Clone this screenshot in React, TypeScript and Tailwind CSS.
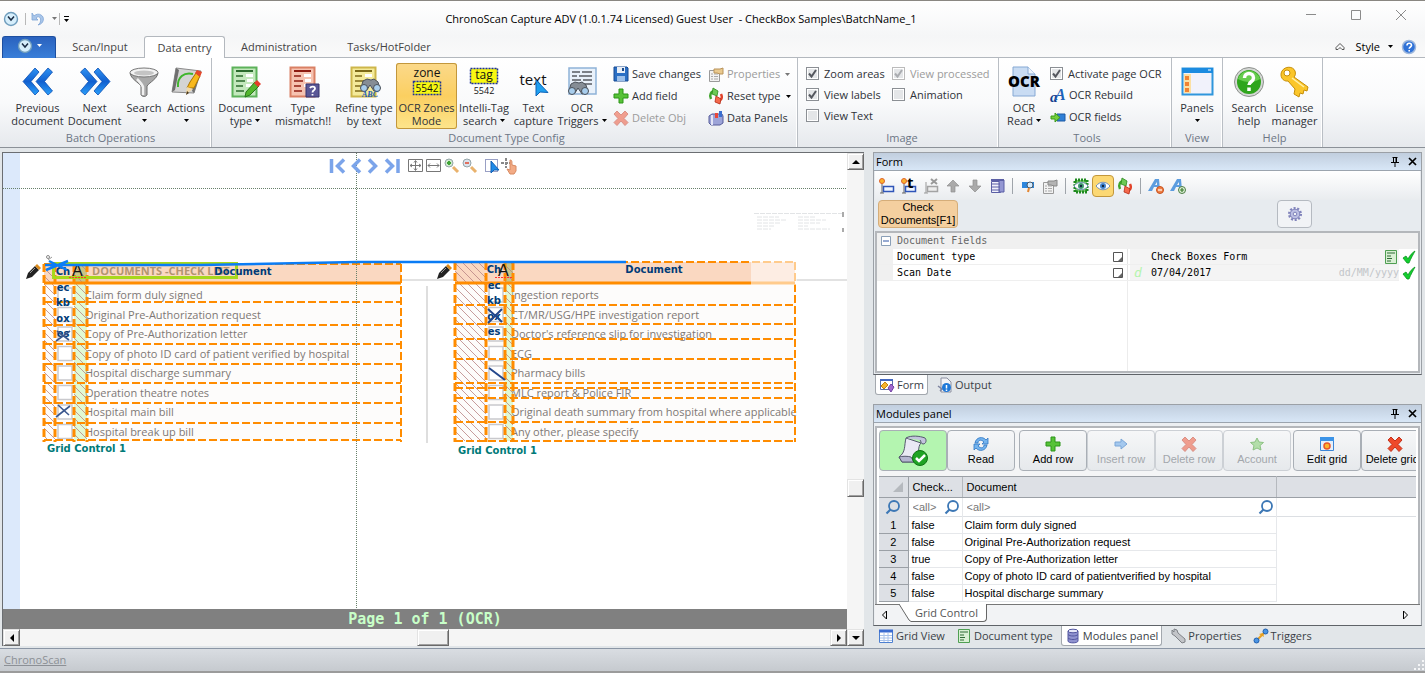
import type { ReactNode } from "react";
import clsx from "clsx";

function Caret({ className = "text-black" }: { className?: string }) {
  return (
    <svg viewBox="0 0 5 3" className={clsx("inline-block w-[5px] h-[3px] shrink-0", className)}>
      <path d="M0 0h5L2.5 3z" fill="currentColor" />
    </svg>
  );
}

function Svg({ size = 16, children }: { size?: number; children: ReactNode }) {
  return (
    <svg
      width={size}
      height={size}
      viewBox={`0 0 ${size} ${size}`}
      fill="none"
      className="block shrink-0 overflow-visible"
      aria-hidden="true"
    >
      {children}
    </svg>
  );
}

function ClockIcon() {
  return (
    <Svg>
      <circle cx="8" cy="8" r="6.5" fill="#d6eefb" stroke="#6f9dbd" strokeWidth="1.4" />
      <path d="M5 5.5 8 9l3-3.5" stroke="#1a2c44" strokeWidth="1.5" />
    </Svg>
  );
}

function DoubleChevron({ flip = false }: { flip?: boolean }) {
  return (
    <Svg size={32}>
      <defs>
        <linearGradient id="chevron" x1="0" y1="0" x2="0" y2="1">
          <stop offset="0" stopColor="#2f93f3" />
          <stop offset=".5" stopColor="#1160d0" />
          <stop offset="1" stopColor="#2aa0fa" />
        </linearGradient>
      </defs>
      <g
        transform={flip ? "translate(32 0) scale(-1 1)" : undefined}
        fill="url(#chevron)"
        stroke="#0b4fb4"
        strokeWidth=".8"
      >
        <path d="M13 2 1 15.500 13 29l4-4-8-9.500L17 6z" />
        <path d="M26 2 14 15.500 26 29l4.500-4-8-9.500 8-9.500z" />
      </g>
    </Svg>
  );
}

function FunnelIcon() {
  return (
    <Svg size={32}>
      <path d="M2 7c1 6 8 9 11 13v9c2 2 4 2 6 0v-9c3-4 10-7 11-13z" fill="#a9a9a9" stroke="#6d6d6d" />
      <path d="M9 13c4 4 5 5 6 8v8" stroke="#f0f0f0" strokeWidth="2.500" />
      <ellipse cx="16" cy="6.500" rx="14" ry="4.500" fill="#f3f3f3" stroke="#777" />
      <ellipse cx="16" cy="7" rx="10" ry="2.500" fill="#c4c4c4" />
    </Svg>
  );
}

function ActionsIcon() {
  return (
    <Svg size={32}>
      <path d="M6 2 31 5 24 27 2 26z" fill="#d4d4d4" stroke="#8a8a8a" />
      <path d="M6 2 9 4 5 24l-3 2zM31 5l-5 2-4 18 2 2z" fill="#6f6f6f" />
      <path d="M8 21C7 11 14 6 23 8" stroke="#3fb52c" strokeWidth="2" />
      <path d="m17 22 3-6 6-9 4 3-6 12z" fill="#f8b81c" stroke="#a97400" />
      <path d="m25 7 2-3 5 2-2 5z" fill="#e5482c" />
      <path d="m16 28 1-7 6 2z" fill="#f2d9a6" />
      <path d="m16 29 1-4 2 2z" fill="#493515" />
    </Svg>
  );
}

function SheetLines({ fill, stroke, bar }: { fill: string; stroke: string; bar: string }) {
  return (
    <>
      <path d="M3.500 1.500h24v29h-24z" fill={fill} stroke={stroke} strokeWidth="2" />
      <path d="M7 5h17" stroke={bar} strokeWidth="2" />
      <path d="M7 10h7M7 15h9M7 20h7M7 25h8" stroke={bar} strokeWidth="1.500" />
      <path d="M17 9.500h7M18 14.500h6M17 19.500h7" stroke="#fff" strokeWidth="3" />
    </>
  );
}

function DocTypeIcon() {
  return (
    <Svg size={32}>
      <SheetLines fill="#c4e8bd" stroke="#5db25a" bar="#2b6b2d" />
      <path d="m17 26 9-10 4 4-9 9-5 2z" fill="#52b62d" stroke="#28771a" />
      <path d="m25 17 3-3 4 4-3 3z" fill="#e43d2b" />
    </Svg>
  );
}

function MismatchIcon() {
  return (
    <Svg size={32}>
      <SheetLines fill="#f6c3b1" stroke="#d98064" bar="#8e1c12" />
      <path d="M19 18h13v13H19z" fill="#5a5796" stroke="#37356d" />
      <path d="M23 22c1-2 5-2 5 .5 0 2-2.500 1.500-2.500 4M25.500 28v1.500" stroke="#fff" strokeWidth="1.800" />
    </Svg>
  );
}

function Binoculars() {
  return (
    <g stroke="#4a5058">
      <path d="m3 3 4-2 4 1 3-1 4 3 2 7-6 2-4-6-3 5-6-2z" fill="#868d95" />
      <circle cx="4" cy="10" r="3.500" fill="#a8cdec" />
      <circle cx="17" cy="10" r="3.500" fill="#a8cdec" />
    </g>
  );
}

function RefineIcon() {
  return (
    <Svg size={32}>
      <SheetLines fill="#f4ea9a" stroke="#cdb64a" bar="#7d6a18" />
      <g transform="translate(12 12)">
        <Binoculars />
      </g>
      <text x="14" y="31" fontSize="8" fontWeight="700" fontStyle="italic" fontFamily="Liberation Serif, serif" fill="#1d5bb5">
        ABC
      </text>
    </Svg>
  );
}

function ZonesIcon() {
  return (
    <Svg size={32}>
      <text x="16" y="11" textAnchor="middle" fontSize="12" fontFamily="Open Sans, sans-serif" fill="#111">
        zone
      </text>
      <path d="M2.500 15.500h27v13h-27z" fill="#f8f812" stroke="#1a2f9c" strokeWidth="1.500" strokeDasharray="2 1" />
      <text x="16" y="26" textAnchor="middle" fontSize="10" fontFamily="Open Sans, sans-serif" fill="#111">
        5542
      </text>
    </Svg>
  );
}

function TagIcon() {
  return (
    <Svg size={32}>
      <path d="M2.500 2.500h27v15h-27z" fill="#f8f812" stroke="#1a2f9c" strokeWidth="1.500" strokeDasharray="2 1" />
      <text x="16" y="13" textAnchor="middle" fontSize="12" fontFamily="Open Sans, sans-serif" fill="#111">
        tag
      </text>
      <text x="16" y="28" textAnchor="middle" fontSize="9" fontFamily="Open Sans, sans-serif" fill="#111">
        5542
      </text>
    </Svg>
  );
}

function TextCaptureIcon() {
  return (
    <Svg size={32}>
      <text x="15" y="19" textAnchor="middle" fontSize="15" fontFamily="Open Sans, sans-serif" fill="#111">
        text
      </text>
      <path d="M18 14v16l4-4 8 .500z" fill="#1fa0f0" stroke="#0c62b8" />
    </Svg>
  );
}

function TriggersOcrIcon() {
  return (
    <Svg size={32}>
      <path d="M3 2h27v26H3z" fill="#e9f1fa" stroke="#8fb2d8" strokeWidth="1.500" />
      <path d="M6 6h8M16 6h10M6 10h5M13 10h13M6 14h9M17 14h9M14 18h12" stroke="#7c8087" strokeWidth="2" />
      <g transform="translate(2 15)">
        <Binoculars />
      </g>
    </Svg>
  );
}

function OcrReadIcon() {
  return (
    <Svg size={32}>
      <path d="M5 1h15l7 7v22H5z" fill="#c9dcf3" stroke="#86a9d4" />
      <path d="M20 1v7h7" fill="#eef5fd" stroke="#86a9d4" />
      <text x="16" y="21" textAnchor="middle" fontSize="15" fontWeight="800" fontFamily="Open Sans, sans-serif" fill="#000">
        OCR
      </text>
    </Svg>
  );
}

function PanelsIcon() {
  return (
    <Svg size={32}>
      <path d="M1.500 2.500h30v26h-30z" fill="#f1f2fb" stroke="#2f96dc" strokeWidth="2" />
      <path d="M1 2h31v5H1z" fill="#1b8be0" />
      <path d="M3 8h7v19H3z" fill="#fbe0a4" />
      <path d="M4 10h4v4H4zM4 16h4v4H4zM4 22h4v4H4z" fill="#f08232" />
      <path d="M27 4h3" stroke="#fff" />
    </Svg>
  );
}

function HelpBigIcon() {
  return (
    <Svg size={32}>
      <circle cx="16" cy="16" r="14.500" fill="#d4d7d4" stroke="#8d918d" />
      <circle cx="16" cy="16" r="12" fill="#2fa51d" />
      <path d="M5 13a11.500 11.500 0 0 1 22 0c-6 4-15 4-22 0z" fill="#66cc4e" />
      <path d="M11.500 12c0-6 9-6 9 0 0 4-4.500 3.500-4.500 7M16 21.500V25" stroke="#fff" strokeWidth="3.500" />
    </Svg>
  );
}

function KeyIcon() {
  return (
    <Svg size={32}>
      <path
        d="M3 5c3-5 11-5 13 0 1 3 0 5-1 6l14 10-1 4-3-1-1 4-3-1-1 4-5-3 1-5-7-8c-5 1-9-5-6-10z"
        fill="#fbc62a"
        stroke="#c68e08"
      />
      <circle cx="8" cy="7" r="3" fill="#fff" stroke="#c68e08" />
      <path d="m13 12 12 9" stroke="#fff0a8" strokeWidth="1.500" />
    </Svg>
  );
}

function FloppyIcon() {
  return (
    <Svg>
      <path d="M1 1h13l1 1v13H1z" fill="#2a6fc4" stroke="#164b92" />
      <path d="M4 1h8v6H4z" fill="#e8eef6" />
      <path d="M4 10h8v5H4z" fill="#9cc0ea" />
      <path d="M9 2h2v3H9z" fill="#1b4a8a" />
    </Svg>
  );
}

function PlusIcon() {
  return (
    <Svg>
      <path d="M6 1h4v5h5v4h-5v5H6v-5H1V6h5z" fill="#57c238" stroke="#2c9518" />
    </Svg>
  );
}

function CrossIcon({ faded = false }: { faded?: boolean }) {
  return (
    <Svg>
      <path
        d="m4 1 4 4 4-4 3 3-4 4.500 4 4-3 3-4-4.500-4 4.500-3-3 4-4L1 4z"
        fill="#ee4a2a"
        stroke="#c4301a"
        opacity={faded ? 0.5 : 1}
      />
    </Svg>
  );
}

function PropsIcon({ gray = false }: { gray?: boolean }) {
  return (
    <Svg>
      <path d="M1.500 4.500h10v11h-10z" fill="#f2f2f2" stroke="#9a9a9a" />
      <path d="M3 8h2M6 8h4M3 10.500h2M6 10.500h4M3 13h2M6 13h4" stroke="#a8a8a8" />
      <path d="M6 3h6l3-1v6h-3l-3-1H6z" fill={gray ? "#b4b4b4" : "#e9c98e"} stroke={gray ? "#888" : "#b9935a"} />
    </Svg>
  );
}

function ResetIcon() {
  return (
    <Svg>
      <path d="M3 11C1 7 3 3 7 3" stroke="#3fa52c" strokeWidth="2.500" />
      <path d="M5 0l5 3-1 5-5-2z" fill="#6cc955" stroke="#2c8a1d" strokeWidth=".8" />
      <path d="M13 6c2 4 0 7-4 7" stroke="#e2432a" strokeWidth="2.500" />
      <path d="M12 16l-5-2 1-6 5 3z" fill="#f4694c" stroke="#b42a14" strokeWidth=".8" />
    </Svg>
  );
}

function DataPanelsIcon() {
  return (
    <Svg>
      <path d="m1 6 3-2h10l1 2v7l-3 2H3l-2-2z" fill="#9da4d8" stroke="#565d9a" />
      <path d="M3 5h2v10H3z" fill="#e3e5f7" />
      <path d="M7 3h3v5H7z" fill="#e8483b" />
      <path d="M11 1h3v6h-3z" fill="#3b6fd0" />
    </Svg>
  );
}

function RebuildIcon() {
  return (
    <Svg>
      <text x="0" y="15" fontSize="15" fontWeight="700" fontStyle="italic" fontFamily="Liberation Serif, serif" fill="#123f8f">
        a
      </text>
      <text x="5" y="13" fontSize="16" fontWeight="700" fontStyle="italic" fontFamily="Liberation Serif, serif" fill="#1d62b8">
        A
      </text>
    </Svg>
  );
}

function FieldsIcon() {
  return (
    <Svg>
      <path d="M7 5h8v7H7z" fill="#2f7fd6" stroke="#1c5aa5" />
      <path d="M1 7h4V4l5 4.500L5 13v-3H1z" fill="#72cf3a" stroke="#3d9a1a" />
    </Svg>
  );
}

interface BigButtonProps {
  icon: ReactNode;
  lines: [string, string];
  width: string;
  menu?: boolean;
  active?: boolean;
}

function BigButton({ icon, lines, width, menu, active }: BigButtonProps) {
  return (
    <button
      className={clsx(
        "h-[66px] pt-[3px] flex flex-col items-center shrink-0 whitespace-nowrap leading-[13px]",
        width,
        active && "rounded-[3px] bg-gradient-to-b from-[#fbd98a] via-[#fbcf60] to-[#fde58c] shadow-[inset_0_0_0_1px_#c2973c]"
      )}
    >
      {icon}
      <span className="mt-[3px]">{lines[0]}</span>
      <span className="flex items-center gap-[3px] h-[13px]">
        {lines[1]}
        {menu && <Caret />}
      </span>
    </button>
  );
}

function Group({ title, width, children }: { title: string; width: string; children: ReactNode }) {
  return (
    <section
      className={clsx(
        "shrink-0 flex flex-col justify-between pt-[5px] pb-px border-r border-[#b9bec4] shadow-[inset_-1px_0_0_#fff]",
        width
      )}
    >
      <div className="flex">{children}</div>
      <h2 className="text-center leading-4 text-[#6d7685]">{title}</h2>
    </section>
  );
}

function SmallButton({ icon, label, menu, disabled }: { icon: ReactNode; label: string; menu?: boolean; disabled?: boolean }) {
  return (
    <button
      disabled={disabled}
      className={clsx("flex items-center gap-[3px] h-[22px] whitespace-nowrap", disabled && "text-[#9b9b9b]")}
    >
      {icon}
      {label}
      {menu && <Caret className={clsx("ml-0.5", disabled ? "text-[#777]" : "text-black")} />}
    </button>
  );
}

function Check({ label, checked, disabled }: { label: string; checked?: boolean; disabled?: boolean }) {
  return (
    <label className={clsx("flex items-center gap-[5px] h-[21px] whitespace-nowrap", disabled && "text-[#9b9b9b]")}>
      <span className="relative block w-[13px] h-[13px] shrink-0">
        <input
          type="checkbox"
          defaultChecked={checked}
          disabled={disabled}
          className="peer block appearance-none w-[13px] h-[13px] border border-[#8b8f94] bg-[#e4e6e8] shadow-[inset_0_0_0_1px_#fff] disabled:border-[#bbb]"
        />
        <svg
          viewBox="0 0 13 13"
          className="absolute inset-0 w-[13px] h-[13px] hidden peer-checked:block peer-disabled:opacity-40 pointer-events-none"
        >
          <path d="M3 6.500 5.500 9.500 10 3" fill="none" stroke="#55585f" strokeWidth="2" />
        </svg>
      </span>
      {label}
    </label>
  );
}

function TitleBar() {
  return (
    <header className="h-9 flex items-center bg-gradient-to-b from-white to-[#f5f6f7] border-t border-[#8a8782]">
      <div className="w-[74px] shrink-0 flex items-center pl-[3px]">
        <ClockIcon />
        <span className="ml-1.5 w-px h-3 bg-[#b8b8b8]" />
        <button aria-label="Undo" className="ml-1">
          <Svg>
            <path d="M2 2v7h6L6 7c3-3 6 0 4 5l-2 2c6-1 7-8 3-10-2-1.500-5-1-7 1z" fill="#a9c6ea" stroke="#7fa5d6" strokeWidth=".8" />
          </Svg>
        </button>
        <Caret className="ml-1.5 text-[#777]" />
        <span className="ml-0.5 w-px h-3 bg-[#b8b8b8]" />
        <svg viewBox="0 0 5 6" className="ml-1 w-[5px] h-1.5" aria-hidden="true">
          <path d="M0 0h5v1H0zM0 3h5L2.500 6z" />
        </svg>
      </div>
      <h1 className="flex-1 min-w-0 truncate text-center whitespace-pre text-black">
        {"ChronoScan Capture ADV (1.0.1.74 Licensed) Guest User  - CheckBox Samples\\BatchName_1"}
      </h1>
      <div className="flex self-start shrink-0 pr-0.5 text-[#8b8b8b]">
        <button aria-label="Minimize" className="w-[45px] h-7 flex justify-center items-center">
          <Svg size={12}>
            <path d="M1 5.500h10" stroke="currentColor" />
          </Svg>
        </button>
        <button aria-label="Maximize" className="w-[45px] h-7 flex justify-center items-center">
          <Svg size={12}>
            <path d="M1.500 1.500h9v9h-9z" stroke="currentColor" />
          </Svg>
        </button>
        <button aria-label="Close" className="w-[45px] h-7 flex justify-center items-center">
          <Svg size={12}>
            <path d="m1 1 10 10M11 1 1 11" stroke="currentColor" />
          </Svg>
        </button>
      </div>
    </header>
  );
}

function TabRow() {
  return (
    <nav className="h-[22px] flex items-stretch bg-gradient-to-b from-[#f5f6f7] to-[#fafafa] text-[#444]">
      <button
        aria-label="Application menu"
        className="ml-0.5 w-[54px] flex items-center justify-center gap-1 pb-1 rounded-t-[3px] border border-b-0 border-[#1d4fa0] bg-gradient-to-b from-[#2a62be] to-[#3a7fd9] text-white"
      >
        <ClockIcon />
        <Caret className="text-white" />
      </button>
      <div className="flex flex-1 border-b border-[#b3b8be]">
        <button className="w-[88px]">Scan/Input</button>
        <button className="relative -mb-px w-[81px] rounded-t-[3px] border border-b-0 border-[#b3b8be] bg-white">
          Data entry
        </button>
        <button className="w-[108px]">Administration</button>
        <button className="w-28">Tasks/HotFolder</button>
        <div className="flex-1" />
        <button aria-label="Minimize ribbon" className="w-5 flex items-center justify-center">
          <Svg size={10}>
            <path d="M1 5.500 5 1.500l4 4v2H7L5 5.500 3 7.500H1z" stroke="#555" />
          </Svg>
        </button>
        <button className="flex items-center gap-2 pl-1.5 pr-1 text-black">
          Style
          <Caret />
        </button>
        <button aria-label="Help" className="pl-1 pr-2">
          <Svg>
            <circle cx="8" cy="8" r="6.500" fill="#2f72d8" stroke="#9fb8dc" strokeWidth="1.500" />
            <path d="M6 6.500c0-3 4.500-3 4.500 0C10.500 8 8.200 8 8.200 9.700M8.200 11v1.500" stroke="#fff" strokeWidth="1.600" />
          </Svg>
        </button>
      </div>
    </nav>
  );
}

function Ribbon() {
  return (
    <div className="h-[90px] shrink-0 flex bg-gradient-to-b from-white via-[#f9fafb] to-[#e6e9ed] border-b border-[#8b9198] overflow-hidden text-[#2f3238]">
      <Group title="Batch Operations" width="w-[212px] pl-2.5">
        <BigButton icon={<DoubleChevron />} lines={["Previous", "document"]} width="w-[55px]" />
        <BigButton icon={<DoubleChevron flip />} lines={["Next", "Document"]} width="w-[59px]" />
        <BigButton icon={<FunnelIcon />} lines={["Search", ""]} width="w-10" menu />
        <BigButton icon={<ActionsIcon />} lines={["Actions", ""]} width="w-11" menu />
      </Group>
      <Group title="Document Type Config" width="w-[586px] pl-1">
        <BigButton icon={<DocTypeIcon />} lines={["Document", "type"]} width="w-[58px]" menu />
        <BigButton icon={<MismatchIcon />} lines={["Type", "mismatch!!"]} width="w-[58px]" />
        <BigButton icon={<RefineIcon />} lines={["Refine type", "by text"]} width="w-16" />
        <BigButton icon={<ZonesIcon />} lines={["OCR Zones", "Mode"]} width="w-[61px]" active />
        <BigButton icon={<TagIcon />} lines={["Intelli-Tag", "search"]} width="w-[54px]" menu />
        <BigButton icon={<TextCaptureIcon />} lines={["Text", "capture"]} width="w-[45px]" />
        <BigButton icon={<TriggersOcrIcon />} lines={["OCR", "Triggers"]} width="w-[52px]" menu />
        <div className="ml-[5px] w-[95px] flex flex-col">
          <SmallButton icon={<FloppyIcon />} label="Save changes" />
          <SmallButton icon={<PlusIcon />} label="Add field" />
          <SmallButton icon={<CrossIcon faded />} label="Delete Obj" disabled />
        </div>
        <div className="flex flex-col">
          <SmallButton icon={<PropsIcon />} label="Properties" menu disabled />
          <SmallButton icon={<ResetIcon />} label="Reset type" menu />
          <SmallButton icon={<DataPanelsIcon />} label="Data Panels" />
        </div>
      </Group>
      <Group title="Image" width="w-[201px] pl-2">
        <div className="w-[86px] flex flex-col">
          <Check label="Zoom areas" checked />
          <Check label="View labels" checked />
          <Check label="View Text" />
        </div>
        <div className="flex flex-col">
          <Check label="View processed" checked disabled />
          <Check label="Animation" />
        </div>
      </Group>
      <Group title="Tools" width="w-[173px] pl-1">
        <BigButton icon={<OcrReadIcon />} lines={["OCR", "Read"]} width="w-[42px]" menu />
        <div className="ml-[5px] flex flex-col">
          <Check label="Activate page OCR" checked />
          <SmallButton icon={<RebuildIcon />} label="OCR Rebuild" />
          <SmallButton icon={<FieldsIcon />} label="OCR fields" />
        </div>
      </Group>
      <Group title="View" width="w-[51px]">
        <BigButton icon={<PanelsIcon />} lines={["Panels", ""]} width="w-[50px]" menu />
      </Group>
      <Group title="Help" width="w-[100px] pl-1">
        <BigButton icon={<HelpBigIcon />} lines={["Search", "help"]} width="w-11" />
        <BigButton icon={<KeyIcon />} lines={["License", "manager"]} width="w-[47px]" />
      </Group>
    </div>
  );
}

const leftRows = [
  "Claim form duly signed",
  "Original Pre-Authorization request",
  "Copy of Pre-Authorization letter",
  "Copy of photo ID card of patient verified by hospital",
  "Hospital discharge summary",
  "Operation theatre notes",
  "Hospital main bill",
  "Hospital break up bill",
];

const rightRows = [
  "Ingestion reports",
  "CT/MR/USG/HPE investigation report",
  "Doctor's reference slip for investigation",
  "ECG",
  "Pharmacy bills",
  "MLC report & Police FIR",
  "Original death summary from hospital where applicable",
  "Any other, please specify",
];

interface ZoneGridProps {
  x: number;
  top: number;
  right: number;
  cols: [number, number, number];
  lines: number[];
  rows: string[];
  labelX: number;
  heading?: string;
}

// zone overlay in page coordinates: x is the outer left edge, cols the inner dividers
function ZoneGrid({ x, top, right, cols, lines, rows, labelX, heading }: ZoneGridProps) {
  const [c1, c2, c3] = cols;
  const w = right - x;
  return (
    <g>
      <rect x={x} y={283} width={w} height={158} fill="#fdfcfb" />
      {rows.map((row, i) => (
        <g key={row}>
          <rect x={c1 + 3} y={288 + i * 19.5} width={14} height={14} fill="#fff" stroke="#c9c9cd" strokeWidth="1.5" />
          <text
            x={c3 - 2}
            y={299 + i * 19.5}
            fontSize="11"
            fontFamily="Open Sans, sans-serif"
            fill="#7d7875"
          >
            {row}
          </text>
        </g>
      ))}
      <rect x={x} y={top} width={w} height={283 - top} fill="#fad8c1" />
      <rect x={c2} y={283} width={c3 - c2} height={158} fill="#b6f59c" fillOpacity=".4" />
      <rect x={c2} y={top} width={c3 - c2} height={283 - top} fill="#a8b860" fillOpacity=".6" />
      <rect x={x} y={top} width={c1 - x} height={441 - top} fill="url(#hatch)" />
      <rect x={c2} y={top} width={c3 - c2} height={441 - top} fill="url(#hatch)" />
      <g stroke="#ff8c00" strokeWidth="2" strokeDasharray="8 3" fill="none">
        {lines.map((y) => (
          <path key={y} d={`M${x} ${y}H${right}`} />
        ))}
        <path d={`M${x} ${top}H${right}`} />
        <path strokeWidth="3" d={`M${x} ${top}V442M${c1} ${top}V442M${c2} ${top}V442M${c3} ${top}V442`} />
        <path d={`M${right} ${top}V442`} />
      </g>
      <path d={`M${x} 283H${right}`} stroke="#ff8c00" strokeWidth="3" />
      {heading && (
        <g>
          <text x={c3 + 5} y="275" fontSize="11" fontWeight="700" fontFamily="Open Sans, sans-serif" fill="#b39470">
            {heading}
          </text>
          <path d="M53.500 263.500h183v14h-183z" stroke="#a8d81c" strokeWidth="3" />
        </g>
      )}
      <g fontSize="10" fontWeight="700" fontFamily="DejaVu Sans, sans-serif" fill="#003c78" textAnchor="middle">
        {["Ch", "ec", "kb", "ox", "es"].map((part, i) => (
          <text key={part} x={c1 + 8} y={top + 11 + i * 15.500}>
            {part}
          </text>
        ))}
        <text x={labelX} y={top + 11}>
          Document
        </text>
      </g>
      <text x={c3 - 15} y={276} fontSize="16" fontFamily="Liberation Sans, sans-serif" fill="#111">
        A
      </text>
      <path d={`M${c3 - 18} 277.500h18`} stroke="#f33" strokeDasharray="2 1" />
      <text x={x + 3} y={x < 100 ? 452 : 454} fontSize="10" fontWeight="700" fontFamily="DejaVu Sans, sans-serif" fill="#007a78">
        Grid Control 1
      </text>
      <g transform={`translate(${x - 18} 265)`}>
        <path d="m0 14 2-6 7-7 4 4-7 7z" fill="#222" />
        <path d="m9 1 2-2 4 4-2 2z" fill="#d98a1c" />
        <path d="m4 8 5-5" stroke="#999" />
      </g>
    </g>
  );
}

function ScanPage() {
  return (
    <svg viewBox="3 153 844 476" width="844" height="476" className="absolute top-0 left-0" fill="none">
      <defs>
        <pattern id="hatch" width="8" height="8" patternUnits="userSpaceOnUse">
          <path d="M-1-1l10 10M7-1l2 2M-1 7l2 2" stroke="#b98484" strokeWidth=".8" />
        </pattern>
      </defs>
      <path d="M3 153h17v476H3z" fill="#dce9fb" />
      <path d="M401 280h446" stroke="#d9d9d9" strokeWidth="1.500" />
      <path d="M427 286v157" stroke="#dedede" strokeWidth="2" />
      <ZoneGrid
        x={44}
        top={264}
        right={401}
        cols={[55, 74, 87]}
        lines={[302, 325, 344, 364, 383, 403, 423, 440]}
        rows={leftRows}
        labelX={243}
        heading="DOCUMENTS -CHECK LIST"
      />
      <path d="m56 341 14-10M57 331l12 9M56 417l14-11M58 405l11 10" stroke="#3c588f" strokeWidth="1.600" />
      <ZoneGrid
        x={455}
        top={262}
        right={795}
        cols={[486, 505, 513]}
        lines={[305, 324, 339, 359, 383, 388, 398, 422, 441]}
        rows={rightRows}
        labelX={654}
      />
      <path d="m488 323 14-14M488 309l14 13M489 368l16 12" stroke="#24478c" strokeWidth="2" />
      <path d="M751 260h46v25h-46z" fill="#fff" fillOpacity=".55" />
      <path d="M45 265h155l157-3h269M46 270l22-9M49 261l18 9" stroke="#0a7cf5" strokeWidth="2.500" />
      <path d="m48 260 4-3" stroke="#999" />
      <circle cx="48" cy="257" r="1.500" stroke="#888" />
      <path d="M356.500 153v476M3 188.500h844" stroke="#67806a" strokeDasharray="1 1" />
      <g stroke="#e2e4e6">
        <path d="M754 213.500h90M757 217h22M757 220h30M757 223h24M757 226h18M757 229h14M798 217h18M798 220h28M798 223h22M798 226h10M798 229h32" strokeDasharray="5 1" />
        <path d="M843 212v5M843 228v4" stroke="#aaa" strokeWidth="2" />
      </g>
    </svg>
  );
}

function CanvasTools() {
  return (
    <div className="absolute top-1 left-[326px] flex items-center">
      <button aria-label="First page">
        <Svg size={18}>
          <path d="M2.500 2v14M15 2.500 8.500 9l6.500 6.500" stroke="#7ba4ea" strokeWidth="3.500" />
        </Svg>
      </button>
      <button aria-label="Previous page">
        <Svg size={18}>
          <path d="M13 2.500 6.500 9l6.500 6.500" stroke="#7ba4ea" strokeWidth="3.500" />
        </Svg>
      </button>
      <button aria-label="Next page">
        <Svg size={18}>
          <path d="M4 2.500 10.500 9 4 15.500" stroke="#7ba4ea" strokeWidth="3.500" />
        </Svg>
      </button>
      <button aria-label="Last page">
        <Svg size={18}>
          <path d="M3 2.500 9.500 9 3 15.500M15 2v14" stroke="#7ba4ea" strokeWidth="3.500" />
        </Svg>
      </button>
      <button aria-label="Fit page" className="ml-1.5">
        <Svg size={18}>
          <path d="M1.500 2.500h14v12h-14zM8.500 4v9M3 8.500h11M7 5.500l1.500-2 1.500 2M7 11.500l1.500 2 1.500-2M5 7 3 8.500 5 10M12 7l2 1.500-2 1.500" stroke="#777" />
        </Svg>
      </button>
      <button aria-label="Fit width">
        <Svg size={18}>
          <path d="M1.500 2.500h14v12h-14zM3 8.500h11M5 6.500l-2 2 2 2M12 6.500l2 2-2 2" stroke="#777" />
        </Svg>
      </button>
      <button aria-label="Zoom in">
        <Svg size={18}>
          <path d="m10 10 5 5" stroke="#e9b26c" strokeWidth="3" />
          <circle cx="6" cy="6" r="4" fill="#cfe9cd" stroke="#95a5a9" />
          <path d="M4 6h4M6 4v4" stroke="#3fa535" strokeWidth="2" />
        </Svg>
      </button>
      <button aria-label="Zoom out">
        <Svg size={18}>
          <path d="m10 10 5 5" stroke="#e9b26c" strokeWidth="3" />
          <circle cx="6" cy="6" r="4" fill="#dbe3ee" stroke="#95a5a9" />
          <path d="M4 6h4" stroke="#e0705f" strokeWidth="2" />
        </Svg>
      </button>
      <button aria-label="Select" className="ml-1">
        <Svg size={18}>
          <path d="M2.500 2.500h12v12h-12z" stroke="#32408a" strokeDasharray="1 1" />
          <path d="M8 4v12l3-3h5z" fill="#1f8be8" stroke="#1260b4" />
        </Svg>
      </button>
      <button aria-label="Pan">
        <Svg size={18}>
          <path d="M5 1v10M0 6h10" stroke="#888" strokeWidth="2" strokeDasharray="3 1" />
          <path d="M9 3c2 0 2 1 2 5l4 1v5l-2 3H9l-3-5 3 1z" fill="#f3ab85" stroke="#d88a62" />
        </Svg>
      </button>
    </div>
  );
}

const bevel =
  "bg-[#f0f0f0] border border-t-[#e3e3e3] border-l-[#e3e3e3] border-r-[#696969] border-b-[#696969] shadow-[inset_1px_1px_0_#fff,inset_-1px_-1px_0_#a0a0a0]";

function ScrollButton({ label, d }: { label: string; d: string }) {
  return (
    <button aria-label={label} className={clsx("w-[17px] h-[17px] shrink-0 flex items-center justify-center", bevel)}>
      <Svg size={8}>
        <path d={d} fill="#000" />
      </Svg>
    </button>
  );
}

function Viewer() {
  return (
    <main className="flex-1 min-w-0 flex flex-col mt-1 mb-0.5 ml-0.5 border-t border-l border-[#6b6e72] bg-white">
      <div className="flex-1 min-h-0 flex">
        <div className="relative flex-1 min-w-0 overflow-hidden bg-white">
          <ScanPage />
          <CanvasTools />
          <p className="absolute inset-x-0 bottom-0 h-5 leading-5 bg-[#808080] text-center text-[#c8ffc8] text-[15px] font-bold font-['DejaVu_Sans_Mono',monospace]">
            Page 1 of 1 (OCR)
          </p>
        </div>
        <div className="w-[17px] shrink-0 flex flex-col justify-between bg-[#f5f5f5]">
          <ScrollButton label="Scroll up" d="M0 6 4 2l4 4z" />
          <div className={clsx("h-[18px] mt-[176px]", bevel)} />
          <span />
        </div>
      </div>
      <div className="h-[17px] shrink-0 flex bg-[#f5f5f5]">
        <ScrollButton label="Scroll left" d="M6 0v8L2 4z" />
        <div className="flex-1 flex justify-center pl-4">
          <div className={clsx("w-8", bevel)} />
        </div>
        <ScrollButton label="Scroll right" d="M2 0v8l4-4z" />
        <ScrollButton label="Scroll down" d="M0 2h8L4 6z" />
      </div>
    </main>
  );
}

function PanelTitle({ title }: { title: string }) {
  return (
    <div className="h-[18px] shrink-0 flex items-center pl-0.5 pr-0.5 bg-gradient-to-b from-[#c1cede] to-[#d8e7f7] border-b border-[#9ba4ae] text-black">
      <h2 className="flex-1">{title}</h2>
      <button aria-label={`Pin ${title}`} className="mr-1.5">
        <Svg size={12}>
          <path d="M3.500 1.500h5M4.500 1.500v5M7.500 1.500v5M2 6.500h8M6 7v4" stroke="#000" />
          <path d="M7 1v6" stroke="#000" />
        </Svg>
      </button>
      <button aria-label={`Close ${title}`}>
        <Svg size={12}>
          <path d="m2 2 7 7M9 2 2 9" stroke="#000" strokeWidth="1.700" />
        </Svg>
      </button>
    </div>
  );
}

function GridFieldIcon({ gray = false }: { gray?: boolean }) {
  return (
    <Svg>
      <path d="M3 4v11M1 15h4" stroke={gray ? "#999" : "#666"} />
      <path d="M4.500 8.500h10v5h-10z" fill={gray ? "#ececec" : "#f0f6ff"} stroke={gray ? "#a3a3a3" : "#2f55b8"} strokeWidth="1.500" />
      {gray ? (
        <path d="m8 1 6 5M14 1 8 6" stroke="#999" strokeWidth="2" />
      ) : (
        <circle cx="3" cy="3" r="2.500" fill="#fbb42c" stroke="#e0622a" />
      )}
    </Svg>
  );
}

function Arrow({ down = false }: { down?: boolean }) {
  return (
    <Svg>
      <path
        transform={down ? "rotate(180 8 8)" : undefined}
        d="m8 2 6 6h-4v6H6V8H2z"
        fill="#aaa"
        stroke="#8f8f8f"
        strokeWidth=".7"
      />
    </Svg>
  );
}

function Eye({ bg }: { bg?: boolean }) {
  return (
    <Svg>
      {bg && <path d="M2 2h12v12H2z" fill="#7ccf6c" stroke="#1f8a1f" strokeWidth="3" strokeDasharray="2 1" />}
      <path d="M1 8c4-5 10-5 14 0-4 5-10 5-14 0z" fill="#fff" stroke="#6f8fb8" />
      <circle cx="8" cy="8" r="3" fill={bg ? "#3f9a72" : "#3f83cf"} />
      <circle cx="8" cy="8" r="1.200" fill="#13253d" />
    </Svg>
  );
}

function FontIcon({ plus = false }: { plus?: boolean }) {
  return (
    <Svg>
      <path d="M0 13 7 1h4l1 11H9V9H6l-2 4zM7 7h2V4z" fill="#5c9ddf" />
      <circle cx="12" cy="12" r="3.500" fill={plus ? "#dff0d8" : "#f08045"} stroke={plus ? "#4b7c41" : "#c7501c"} />
      <path d={plus ? "M10 12h4M12 10v4" : "M10 12h4"} stroke={plus ? "#3a7a2c" : "#fff"} strokeWidth="1.200" />
    </Svg>
  );
}

function DatabaseIcon() {
  return (
    <Svg>
      <path d="M3 3v10c0 2.500 10 2.500 10 0V3z" fill="#8f92cf" stroke="#5356a0" />
      <path d="M3 6.500c2 2 8 2 10 0M3 10c2 2 8 2 10 0" stroke="#5356a0" />
      <ellipse cx="8" cy="3" rx="5" ry="1.800" fill="#e6e7f8" stroke="#5356a0" />
    </Svg>
  );
}

function SheetIcon() {
  return (
    <Svg>
      <path d="M2.500 1.500h11v13h-11z" fill="#d9f0d4" stroke="#4f9f52" />
      <path d="M4 4h8M4 7h4M4 9.500h5M4 12h4" stroke="#2f6b35" strokeWidth="1.200" />
    </Svg>
  );
}

function TickIcon() {
  return (
    <Svg>
      <path d="m2 9 3-2 2 3c2-4 4-6 7-8-2 4-4 7-6 12H6z" fill="#12cf2e" stroke="#0b961f" strokeWidth=".8" />
    </Svg>
  );
}

function ToolSep() {
  return <span className="w-px h-4 mx-px bg-[#9fa4aa]" />;
}

function FieldRow({ label, value, hint }: { label: string; value: string; hint?: string }) {
  const id = label.toLowerCase().replace(" ", "-");
  return (
    <div className="flex h-4 border-b border-[#efefef]">
      <div className="w-4 shrink-0 bg-[#f0f0f0]" />
      <label htmlFor={id} className="w-[234px] shrink-0 flex items-center justify-between pl-1 pr-1 text-black">
        {label}
        <Svg size={10}>
          <path d="M.500 .500h9v9h-9z" fill="#fff" stroke="#555" />
          <path d="M9 5v4H5z" fill="#666" />
        </Svg>
      </label>
      <div className="w-[3px] shrink-0 border-l border-[#e4e4e4]" />
      <div className="flex-1 min-w-0 flex items-center bg-[#f4f4f4]">
        <span className="w-[21px] shrink-0 pl-1 italic text-[13px] text-[#b4f5ae]">{hint && "d"}</span>
        <input id={id} defaultValue={value} className="flex-1 min-w-0 bg-transparent text-black outline-none" />
        {hint ? <span className="text-[#c3c6ca]">{hint}</span> : <SheetIcon />}
        <span className="w-[19px] h-4 flex justify-center bg-white">
          <TickIcon />
        </span>
      </div>
    </div>
  );
}

function PanelTab({ icon, label, active }: { icon: ReactNode; label: string; active?: boolean }) {
  return (
    <button
      className={clsx(
        "h-5 flex items-center gap-0.5 px-[3px] whitespace-nowrap text-[#3a3f47]",
        active && "bg-white rounded-b-[3px] border border-t-0 border-[#a3a8ae]"
      )}
    >
      {icon}
      {label}
    </button>
  );
}

function FormPanel() {
  return (
    <section className="flex-1 min-h-0 flex flex-col">
      <div className="flex-1 min-h-0 flex flex-col border border-[#9ba0a6] border-b-[#5f6368]">
        <PanelTitle title="Form" />
        <div className="flex-1 min-h-0 flex flex-col px-px pb-px bg-[#e7ebef]">
          <div className="h-[29px] shrink-0 flex items-center gap-1.5 px-1 bg-gradient-to-b from-white to-[#e9ecef]">
            <button aria-label="Add field">
              <GridFieldIcon />
            </button>
            <button aria-label="Add text field" className="relative">
              <GridFieldIcon />
              <span className="absolute left-1.5 -top-1 text-[15px] leading-4 font-bold text-black">t</span>
            </button>
            <button aria-label="Remove field">
              <GridFieldIcon gray />
            </button>
            <button aria-label="Move up">
              <Arrow />
            </button>
            <button aria-label="Move down">
              <Arrow down />
            </button>
            <button aria-label="Table">
              <Svg>
                <path d="M2.500 3.500h9v11h-9z" fill="#f1f1fb" stroke="#5b5fa5" />
                <path d="M10 2h5v12h-5zM3 6h8M3 9h8M3 12h8" fill="#9497d3" stroke="#5b5fa5" />
                <path d="M2 2h13" stroke="#5b5fa5" strokeWidth="2" />
              </Svg>
            </button>
            <ToolSep />
            <button aria-label="Find field">
              <Svg>
                <path d="M2 4h12v6H2z" fill="#2d86dc" />
                <circle cx="10" cy="7" r="3" fill="#d5ecff" stroke="#4b5866" />
                <path d="m9 10-1 4" stroke="#e48732" strokeWidth="2" />
              </Svg>
            </button>
            <button aria-label="Field properties">
              <PropsIcon gray />
            </button>
            <ToolSep />
            <button aria-label="Show zones">
              <Eye bg />
            </button>
            <button
              aria-label="Show fields"
              className="w-[22px] h-[22px] -mx-[3px] flex items-center justify-center rounded-sm border border-[#c2973c] bg-[#fcd873]"
            >
              <Eye />
            </button>
            <button aria-label="Refresh">
              <ResetIcon />
            </button>
            <ToolSep />
            <button aria-label="Smaller font">
              <FontIcon />
            </button>
            <button aria-label="Larger font">
              <FontIcon plus />
            </button>
          </div>
          <div className="h-[31px] shrink-0 flex items-start justify-between pl-[3px] pr-[108px] text-black font-['Liberation_Sans',sans-serif]">
            <button className="w-20 h-7 leading-[13px] border border-[#d5ad79] rounded-sm bg-[#f4cf9f]">
              Check Documents[F1]
            </button>
            <button
              aria-label="Settings"
              className="w-[35px] h-7 flex items-center justify-center border border-[#b5bac1] rounded-sm bg-[#f1f3f6]"
            >
              <Svg>
                <circle cx="8" cy="8" r="5.800" stroke="#8083bb" strokeWidth="2.500" strokeDasharray="2 1.600" />
                <circle cx="8" cy="8" r="4.800" fill="#bcbfe3" stroke="#8083bb" />
                <circle cx="8" cy="8" r="1.800" fill="#f1f3f6" stroke="#8083bb" />
              </Svg>
            </button>
          </div>
          <div className="flex-1 min-h-0 flex flex-col border-2 border-[#b4b7bb] bg-white text-[10px] font-['DejaVu_Sans_Mono',monospace]">
            <div className="h-4 shrink-0 flex items-center gap-1.5 pl-1 bg-[#f0f0f0] text-[#666]">
              <button aria-label="Collapse">
                <Svg size={10}>
                  <path d="M.500 .500h9v9h-9z" fill="#fff" stroke="#8ba0b8" />
                  <path d="M2 5h6" stroke="#2f55a5" />
                </Svg>
              </button>
              Document Fields
            </div>
            <FieldRow label="Document type" value="Check Boxes Form" />
            <FieldRow label="Scan Date" value="07/04/2017" hint="dd/MM/yyyy" />
            <div className="flex-1 w-[251px] border-r border-[#ececec]" />
          </div>
        </div>
      </div>
      <div className="shrink-0 flex gap-1.5 pl-0.5">
        <PanelTab
          active
          label="Form"
          icon={
            <Svg>
              <path d="M1.500 2.500h12v10h-12z" fill="#fff" stroke="#5c6fa8" />
              <path d="M1 3h13" stroke="#4468c0" strokeWidth="2" />
              <path d="m2 9 4-4 3 3-4 4z" fill="#f7b32c" stroke="#c48510" />
              <path d="m9 11 3-4 3 3-3 5z" fill="#a06bd0" stroke="#7340a5" />
            </Svg>
          }
        />
        <PanelTab
          label="Output"
          icon={
            <Svg>
              <path d="M4 1h6l4 4v10H4z" fill="#f3f3f6" stroke="#8b8fa0" />
              <path d="m1 9 4 3-2 2" stroke="#7d84a0" strokeWidth="1.500" />
              <circle cx="9.500" cy="10.500" r="4.500" fill="#1f78d8" />
              <path d="M9.500 8v3.500M9.500 12.500V14" stroke="#fff" strokeWidth="1.500" />
            </Svg>
          }
        />
      </div>
    </section>
  );
}

function ModuleButton({ icon, label, disabled, className }: { icon: ReactNode; label?: string; disabled?: boolean; className?: string }) {
  return (
    <button
      disabled={disabled}
      aria-label={label ?? "Run"}
      className={clsx(
        "w-[68px] h-[41px] shrink-0 flex flex-col items-center justify-center border rounded-sm leading-[14px] whitespace-nowrap",
        disabled ? "border-[#ccd0d5] bg-[#e9ecf0] text-[#a3a7ac]" : "border-[#a9afb6] text-black",
        className ?? "bg-gradient-to-b from-[#f6f7f8] to-[#e6e9ec]"
      )}
    >
      {icon}
      {label}
    </button>
  );
}

const gridRows = [
  ["false", "Claim form duly signed"],
  ["false", "Original Pre-Authorization request"],
  ["true", "Copy of Pre-Authorization letter"],
  ["false", "Copy of photo ID card of patientverified by hospital"],
  ["false", "Hospital discharge summary"],
];

function Lens() {
  return (
    <Svg>
      <circle cx="9" cy="7" r="5" stroke="#3c77b5" strokeWidth="1.800" />
      <path d="m5.500 10.500-4 4" stroke="#3c77b5" strokeWidth="2.200" />
    </Svg>
  );
}

function Filter({ label }: { label: string }) {
  return (
    <div className="flex items-center pl-1 pr-0.5">
      <input aria-label={label} placeholder="<all>" className="flex-1 min-w-0 outline-none placeholder:text-[#777]" />
      <Lens />
    </div>
  );
}

function ModulesTable() {
  const head = "bg-[#dde0e5] border-b border-[#9ba0a6] font-normal text-left";
  return (
    <table className="w-full table-fixed border-collapse text-[11px] text-black">
      <colgroup>
        <col className="w-[29px]" />
        <col className="w-[54px]" />
        <col className="w-[314px]" />
        <col />
      </colgroup>
      <thead>
        <tr className="h-[21px]">
          <th className={clsx(head, "border-r border-t")}>
            <svg viewBox="0 0 10 10" className="ml-3.5 w-2.5 h-2.5" aria-hidden="true">
              <path d="M10 0v10H0z" fill="#b5b9be" />
            </svg>
          </th>
          <th className={clsx(head, "border-t pl-1")}>Check...</th>
          <th className={clsx(head, "border-t pl-1 border-x border-x-[#b5b9be]")}>Document</th>
          <th className={clsx(head, "border-t")} />
        </tr>
      </thead>
      <tbody>
        <tr className="h-[19px] border-b border-[#dcdfe3]">
          <td className="bg-[#dde0e5] border-r border-[#9ba0a6] pl-1.5">
            <Lens />
          </td>
          <td className="border-r border-[#e6e8eb]">
            <Filter label="Filter checkboxes" />
          </td>
          <td className="border-r border-[#e6e8eb]">
            <Filter label="Filter documents" />
          </td>
          <td />
        </tr>
        {gridRows.map(([checked, name], i) => (
          <tr key={name} className="h-[17px] leading-4">
            <th className="bg-[#dde0e5] border-r border-b border-[#9ba0a6] font-normal">{i + 1}</th>
            <td className="border-r border-b border-[#e6e8eb] pl-[3px]">{checked}</td>
            <td className="border-r border-b border-[#e6e8eb] pl-0.5">{name}</td>
            <td />
          </tr>
        ))}
      </tbody>
    </table>
  );
}

function ModulesPanel() {
  return (
    <section className="shrink-0 flex flex-col">
      <div className="border border-[#9ba0a6] border-b-[#5f6368] bg-[#eceff2]">
        <PanelTitle title="Modules panel" />
        <div className="mt-[3px] mx-px p-0.5 border-2 border-b-0 border-[#b4b7bb] bg-white font-['Liberation_Sans',sans-serif]">
          <div className="flex pb-[5px] bg-[#f4f5f6] overflow-hidden">
            <ModuleButton
              className="bg-[#b4f5b0]"
              icon={
                <Svg size={32}>
                  <path d="M9 3c-2 8 0 14-7 19l3 5h14c4-7 1-15 5-19z" fill="#e9e9f4" stroke="#55586e" />
                  <path d="M9 3c5-3 14-2 19 0 2 2 1 6-2 6-2 0-2-3-3-4" fill="#c3c4de" stroke="#55586e" />
                  <path d="M2 22c3-1 9-1 12 0l3 5H5z" fill="#b4b5d0" stroke="#55586e" />
                  <circle cx="23" cy="23" r="7.500" fill="#1fa324" stroke="#0e7313" />
                  <path d="m19 23 3 3 6-6" stroke="#fff" strokeWidth="2.500" />
                </Svg>
              }
            />
            <ModuleButton
              label="Read"
              icon={
                <Svg>
                  <path d="M2 7c1-6 8-7 11-3l2-2v6H9l2-2C8 3 5 4 5 7zM14 9c-1 6-8 7-11 3l-2 2V8h6l-2 2c3 3 6 2 6-1z" fill="#74b4ee" stroke="#2f76c4" strokeWidth=".8" />
                </Svg>
              }
            />
            <span className="w-1 shrink-0" />
            <ModuleButton label="Add row" icon={<PlusIcon />} />
            <ModuleButton
              disabled
              label="Insert row"
              icon={
                <Svg>
                  <path d="M2 6h6V3l6 5-6 5v-3H2z" fill="#a4c8ee" stroke="#7aa6d8" />
                </Svg>
              }
            />
            <ModuleButton disabled label="Delete row" icon={<CrossIcon faded />} />
            <ModuleButton
              disabled
              label="Account"
              icon={
                <Svg>
                  <path d="m8 2 2 4 4.500.5L11 9.500l1 4.500-4-2-4 2 1-4.500-3.500-3L6 6z" fill="#b3deaa" stroke="#8cc282" />
                </Svg>
              }
            />
            <span className="w-0.5 shrink-0" />
            <ModuleButton
              label="Edit grid"
              icon={
                <Svg>
                  <path d="M1.500 1.500h13v13h-13z" fill="#e6f0fb" stroke="#3c86d8" />
                  <path d="M1 1h14v4H1z" fill="#3c94e8" />
                  <circle cx="8" cy="10" r="3" fill="#fbb42c" stroke="#e8562a" strokeWidth="1.500" />
                </Svg>
              }
            />
            <ModuleButton label="Delete grids" icon={<CrossIcon />} />
          </div>
          <ModulesTable />
        </div>
        <div className="mx-px h-[21px] flex items-start border-t border-[#777] bg-[#f2f3f5]">
          <button aria-label="Previous sheet" className="w-6 h-5 flex items-center pl-1">
            <Svg size={10}>
              <path d="M7.500 1v8l-4-4z" stroke="#000" />
            </Svg>
          </button>
          <svg width="12" height="18" viewBox="0 0 12 18" className="-mt-px" aria-hidden="true">
            <path d="M0 0 12 18V0z" fill="#fff" />
            <path d="m0 0 10 16 2 1.500" fill="none" stroke="#666" />
          </svg>
          <button className="-mt-px h-[18px] pl-1 pr-2 bg-white border-r border-b border-[#666] rounded-br-sm text-[#555]">
            Grid Control
          </button>
          <span className="flex-1" />
          <button aria-label="Next sheet" className="w-5 h-5 flex items-center">
            <Svg size={10}>
              <path d="M3.500 1v8l4-4z" stroke="#000" />
            </Svg>
          </button>
        </div>
      </div>
      <div className="flex gap-[5px] pl-0.5">
        <PanelTab
          label="Grid View"
          icon={
            <Svg>
              <path d="M1.500 2.500h13v12h-13z" fill="#fff" stroke="#4c7fd0" />
              <path d="M1 3h14" stroke="#3a6bd0" strokeWidth="3" />
              <path d="M2 7.500h12M2 10h12M2 12.500h12M6 5v9M10 5v9" stroke="#a8c2ea" />
            </Svg>
          }
        />
        <PanelTab label="Document type" icon={<SheetIcon />} />
        <PanelTab active label="Modules panel" icon={<DatabaseIcon />} />
        <PanelTab
          label="Properties"
          icon={
            <Svg>
              <path d="M2 2v4l3 2 7 7 3-1v-3L8 5 7 2 4 1v3z" fill="#c2c4c8" stroke="#7f8287" />
            </Svg>
          }
        />
        <PanelTab
          label="Triggers"
          icon={
            <Svg>
              <path d="m4 12 8-8" stroke="#e8a020" strokeWidth="2" />
              <path d="m6 6 4-1 1 4z" fill="#e8a020" />
              <circle cx="3.500" cy="12.500" r="2.500" fill="#4a94e4" stroke="#1f5fae" />
              <circle cx="12.500" cy="3.500" r="2.500" fill="#4a94e4" stroke="#1f5fae" />
            </Svg>
          }
        />
      </div>
    </section>
  );
}

export default function App() {
  return (
    <div className="h-screen min-h-[560px] flex flex-col overflow-hidden bg-[#e2e6e9] text-[11px] leading-4 font-['Open_Sans',sans-serif]">
      <TitleBar />
      <TabRow />
      <Ribbon />
      <div className="flex-1 min-h-0 flex">
        <Viewer />
        <aside className="w-[561px] shrink-0 flex flex-col gap-[9px] pt-1 pb-0.5 pl-[9px] pr-[3px]">
          <FormPanel />
          <ModulesPanel />
        </aside>
      </div>
      <footer className="h-[25px] shrink-0 flex items-center justify-between pl-1 border-t border-[#8b96a5] bg-gradient-to-b from-[#d9dde2] to-[#c6cacf] border-b-2 border-b-[#9b9b9b]">
        <a href="#chronoscan" className="underline text-[#8c9096]">
          ChronoScan
        </a>
        <svg width="12" height="12" viewBox="0 0 12 12" className="self-end" aria-hidden="true">
          <path d="M9 1h2v2H9zM9 5h2v2H9zM5 5h2v2H5zM9 9h2v2H9zM5 9h2v2H5zM1 9h2v2H1z" fill="#f5f6f7" />
        </svg>
      </footer>
    </div>
  );
}
